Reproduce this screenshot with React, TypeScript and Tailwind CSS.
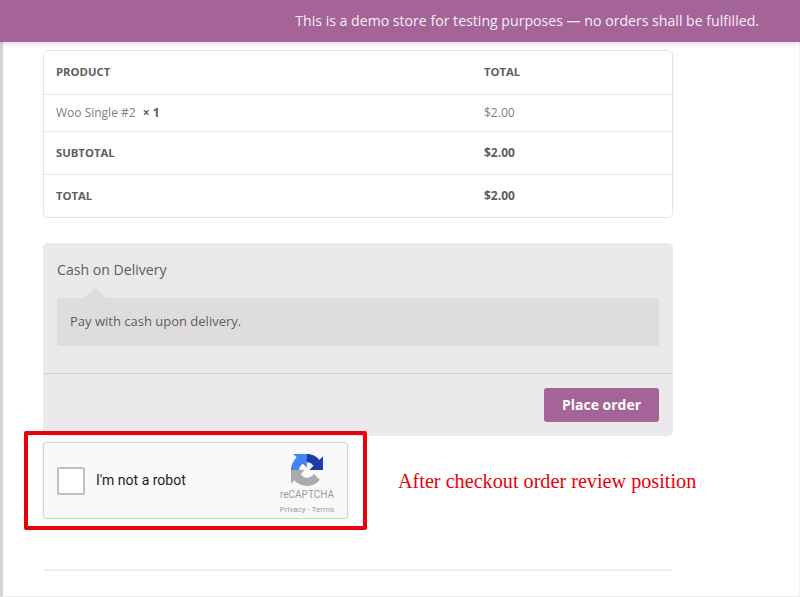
function RecaptchaIcon() {
  return (
    <svg viewBox="0 0 64 64" className="size-8" aria-hidden="true">
      <path
        fill="#1c3aa9"
        d="M64 31.955l-.033-1.37V4.687l-7.16 7.16C50.948 4.674 42.033.093 32.05.093c-10.4 0-19.622 4.96-25.458 12.64l11.736 11.86a15.55 15.55 0 0 1 4.754-5.334c2.05-1.6 4.952-2.906 8.968-2.906.485 0 .86.057 1.135.163 4.976.393 9.288 3.14 11.828 7.124l-8.307 8.307c10.522-.04 22.4-.066 27.295.003"
      />
      <path
        fill="#4285f4"
        d="M31.862.094l-1.37.033H4.594l7.16 7.16C4.58 13.147 0 22.06 0 32.046c0 10.4 4.96 19.622 12.64 25.458l11.86-11.736a15.55 15.55 0 0 1-5.334-4.754c-1.6-2.05-2.906-4.952-2.906-8.968 0-.485.057-.86.163-1.135.393-4.976 3.14-9.288 7.124-11.828l8.307 8.307c-.04-10.522-.066-22.4.003-27.295"
      />
      <path
        fill="#ababab"
        d="M.001 32.045l.033 1.37v25.898l7.16-7.16c5.86 7.173 14.774 11.754 24.76 11.754 10.4 0 19.622-4.96 25.458-12.64l-11.736-11.86a15.55 15.55 0 0 1-4.754 5.334c-2.05 1.6-4.952 2.906-8.968 2.906-.485 0-.86-.057-1.135-.163-4.976-.393-9.288-3.14-11.828-7.124l8.307-8.307C21.776 32.054 9.898 32.08 5 32.01"
      />
    </svg>
  );
}

const rows = [
  { label: "SUBTOTAL", value: "$2.00" },
  { label: "TOTAL", value: "$2.00" },
];

export default function App() {
  return (
    <div className="h-[597px] w-[800px] overflow-hidden bg-white font-['Open_Sans',sans-serif] text-[#5f5c5f]">
      <header className="relative z-10 flex h-[42px] items-center justify-end bg-[#a46497] pr-[41px] text-[14.12px] text-[#f7eef5] shadow-[0_1px_6px_rgba(0,0,0,0.18)]">
        This is a demo store for testing purposes — no orders shall be fulfilled.
      </header>

      <main className="h-[555px] border-r border-b border-l-[3px] border-r-[#f1f1f1] border-b-[#ececec] border-l-[#d4d4d4] pl-10 pt-2">
        <div className="w-[630px]">
          <table className="w-full border-separate border-spacing-0 overflow-hidden rounded-[5px] border border-[#e4e4e4] text-[12px]">
            <tbody>
              <tr className="h-[43px] font-bold">
                <td className="w-[440px] pl-3 text-[11.3px]">PRODUCT</td>
                <td className="text-[11.3px]">TOTAL</td>
              </tr>
              <tr className="h-[37px] text-[#808080]">
                <td className="border-t border-[#e8e8e8] pl-3">
                  Woo Single #2 <b className="ml-1 text-[#5f5c5f]">× 1</b>
                </td>
                <td className="border-t border-[#e8e8e8]">$2.00</td>
              </tr>
              {rows.map((row) => (
                <tr key={row.label} className="h-[43px] font-bold">
                  <td className="border-t border-[#e8e8e8] pl-3 text-[11.3px]">{row.label}</td>
                  <td className="border-t border-[#e8e8e8]">{row.value}</td>
                </tr>
              ))}
            </tbody>
          </table>

          <section className="mt-[25px] h-[193px] rounded-[5px] bg-[#ebe9eb]">
            <div className="h-[131px] border-b border-[#d3ced3] px-3.5 pt-[17px]">
              <p className="text-[14.1px] leading-[20px]">Cash on Delivery</p>
              <div className="relative mt-[18px] flex h-12 items-center rounded-[2px] bg-[#dfdcde] px-[13px] text-[13px]">
                <span className="absolute -top-2.5 left-[27px] size-0 border-x-[11px] border-b-[10px] border-x-transparent border-b-[#dfdcde]" />
                Pay with cash upon delivery.
              </div>
            </div>
            <div className="flex justify-end px-3.5 pt-3.5">
              <button className="h-[34px] w-[115px] rounded-[3px] bg-[#a46497] pb-0.5 text-[14px] font-bold text-white">
                Place order
              </button>
            </div>
          </section>

          <div className="mt-[6px] flex items-center">
            <div className="relative flex h-[77px] w-[305px] shrink-0 items-center rounded-[3px] border border-[#d3d3d3] bg-[#f9f9f9] pl-[13px] font-['Roboto',sans-serif] shadow-[0_0_3px_rgba(0,0,0,0.08)]">
              <span className="absolute -inset-x-[20px] -inset-y-[12px] rounded-[2px] border-4 border-[#e8000b]" />
              <span className="size-7 rounded-[2px] border-2 border-[#c1c1c1] bg-white" />
              <span className="ml-[11px] text-[14px] text-[#222]">I'm not a robot</span>
              <div className="ml-auto mr-[5px] flex w-[70px] flex-col items-center pt-[9px]">
                <RecaptchaIcon />
                <span className="mt-[2px] text-[10px] leading-[14px] text-[#9b9b9b]">reCAPTCHA</span>
                <span className="mt-[2px] text-[8px] leading-[12px] text-[#9b9b9b]">Privacy - Terms</span>
              </div>
            </div>
            <p className="ml-[50px] whitespace-nowrap pt-0.5 font-['Liberation_Serif',serif] text-[20.2px] text-[#e8000b]">
              After checkout order review position
            </p>
          </div>

          <hr className="mt-[50px] border-t-2 border-[#eeeeee]" />
        </div>
      </main>
    </div>
  );
}
